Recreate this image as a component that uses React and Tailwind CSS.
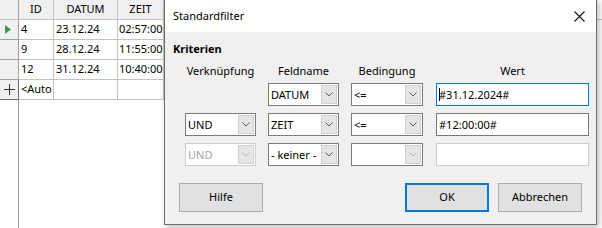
import React from "react";

const font = { fontFamily: '"Noto Sans", "Open Sans", sans-serif' };

function Chevron({ color = "#5a5a5a" }) {
  return (
    <svg width="8" height="5" viewBox="0 0 8 5" className="block">
      <path d="M0.5 0.5 L4 4 L7.5 0.5" fill="none" stroke={color} strokeWidth="1" />
    </svg>
  );
}

function Combo({ value, disabled, lightArrow }) {
  return (
    <div
      className={
        "flex h-[23px] w-full items-stretch border bg-white " +
        (disabled ? "border-[#cccccc]" : "border-[#7a7a7a]")
      }
    >
      <div
        className={
          "flex flex-1 items-center overflow-hidden whitespace-nowrap pl-[2px] text-[11px] leading-none " +
          (disabled ? "text-[#a3a3a3]" : "text-black")
        }
      >
        {value}
      </div>
      <div className="my-px mr-px flex w-[16px] items-center justify-center border border-[#d0d0d0] bg-[#e5e5e5]">
        <Chevron color={disabled || lightArrow ? "#b5b5b5" : "#5a5a5a"} />
      </div>
    </div>
  );
}

function Field({ value, variant }) {
  const border =
    variant === "focus"
      ? "border-[#0078d7]"
      : variant === "disabled"
      ? "border-[#cccccc]"
      : "border-[#7a7a7a]";
  return (
    <div className={"flex h-[23px] w-[153px] items-center justify-self-end border bg-white pl-[2px] text-[11px] leading-none text-black " + border}>
      {variant === "focus" && <span className="mr-[-1px] inline-block h-[13px] w-px bg-black" />}
      {value}
    </div>
  );
}

function Button({ children, primary, className = "" }) {
  return (
    <div
      className={
        "flex h-[29px] w-[84px] items-center justify-center bg-[#e1e1e1] text-[11px] text-black " +
        (primary ? "border-2 border-[#0078d7]" : "border border-[#adadad]") +
        " " +
        className
      }
    >
      {children}
    </div>
  );
}

const rows = [
  { id: "4", datum: "23.12.24", zeit: "02:57:00", current: true },
  { id: "9", datum: "28.12.24", zeit: "11:55:00" },
  { id: "12", datum: "31.12.24", zeit: "10:40:00" },
];

function Grid() {
  return (
    <div className="flex h-full flex-col text-[11px] text-black">
      <div className="flex h-[20px] border-b border-[#c3c3c3]">
        <div className="w-[19px] border-r border-[#a0a0a0] bg-[#f0f0f0]" />
        <div className="flex w-[35px] items-center justify-center border-r border-[#c3c3c3] bg-[#f0f0f0]">ID</div>
        <div className="flex w-[64px] items-center justify-center border-r border-[#c3c3c3] bg-[#f0f0f0]">DATUM</div>
        <div className="flex w-[46px] items-center justify-center border-r border-[#c3c3c3] bg-[#f0f0f0]">ZEIT</div>
        <div className="flex-1" />
      </div>
      {rows.map((r) => (
        <div key={r.id} className="flex h-[20px]">
          <div className="flex w-[19px] items-center justify-center border-b border-r border-[#a0a0a0] bg-[#f0f0f0]">
            {r.current && (
              <svg width="6" height="9" viewBox="0 0 6 9" className="ml-[-3px] block">
                <path d="M0 0 L6 4.5 L0 9 Z" fill="#3c9a48" />
              </svg>
            )}
          </div>
          <div className="flex w-[35px] items-center border-b border-r border-[#c3c3c3] pl-[2px]">{r.id}</div>
          <div className="flex w-[64px] items-center border-b border-r border-[#c3c3c3] pl-[2px]">{r.datum}</div>
          <div className="flex w-[46px] items-center overflow-hidden whitespace-nowrap border-b border-r border-[#c3c3c3] pl-[1px]">{r.zeit}</div>
        </div>
      ))}
      <div className="flex h-[20px]">
        <div className="flex w-[19px] items-center justify-center border-b border-r border-[#707070] bg-[#f0f0f0]">
          <svg width="11" height="11" viewBox="0 0 11 11" className="block">
            <path d="M5.5 0 V11 M0 5.5 H11" stroke="#333" strokeWidth="1" />
          </svg>
        </div>
        <div className="flex w-[35px] items-center overflow-hidden whitespace-nowrap border-b border-r border-[#c3c3c3] pl-[2px]">&lt;Auto</div>
        <div className="w-[64px] border-b border-r border-[#c3c3c3]" />
        <div className="w-[46px] border-b border-r border-[#c3c3c3]" />
      </div>
      <div className="flex flex-1">
        <div className="w-[19px] border-r border-[#a0a0a0]" />
      </div>
    </div>
  );
}

function Dialog() {
  return (
    <div className="absolute left-[164px] top-[-1px] flex h-[226px] w-[433px] flex-col border border-[#6e6e6e] bg-[#f0f0f0] shadow-[2px_2px_6px_rgba(0,0,0,0.28)]">
      <div className="flex h-[32px] items-center justify-between bg-white pl-[8px] pr-[11px]">
        <span className="text-[11px] text-black">Standardfilter</span>
        <svg width="11" height="11" viewBox="0 0 11 11" className="block">
          <path d="M0.5 0.5 L10.5 10.5 M10.5 0.5 L0.5 10.5" stroke="#111" strokeWidth="1.1" />
        </svg>
      </div>
      <div className="flex flex-1 flex-col">
        <div className="pl-[8px] pt-[9px] text-[11px] font-bold leading-[16px] text-black">Kriterien</div>
        <div className="mt-[6px] grid grid-cols-[71px_71px_72px_154px] gap-x-[12px] pl-[20px] text-[11px] leading-[16px] text-black">
          <div className="text-center">Verknüpfung</div>
          <div className="text-center">Feldname</div>
          <div className="text-center">Bedingung</div>
          <div className="ml-px text-center">Wert</div>
        </div>
        <div className="mt-[4px] grid grid-cols-[71px_71px_72px_154px] gap-x-[12px] gap-y-[7px] pl-[20px]">
          <div />
          <Combo value="DATUM" />
          <Combo value="<=" />
          <Field value="#31.12.2024#" variant="focus" />

          <Combo value="UND" />
          <Combo value="ZEIT" />
          <Combo value="<=" />
          <Field value="#12:00:00#" />

          <Combo value="UND" disabled />
          <Combo value="- keiner -" />
          <Combo value="" lightArrow />
          <Field value="" variant="disabled" />
        </div>
        <div className="mt-[17px] flex items-center px-[14px]">
          <Button>Hilfe</Button>
          <div className="flex-1" />
          <Button primary className="w-[83px]">OK</Button>
          <Button className="ml-[9px]">Abbrechen</Button>
        </div>
      </div>
    </div>
  );
}

export default function App() {
  return (
    <div className="relative h-[228px] w-[602px] overflow-hidden bg-white" style={font}>
      <Grid />
      <Dialog />
    </div>
  );
}
